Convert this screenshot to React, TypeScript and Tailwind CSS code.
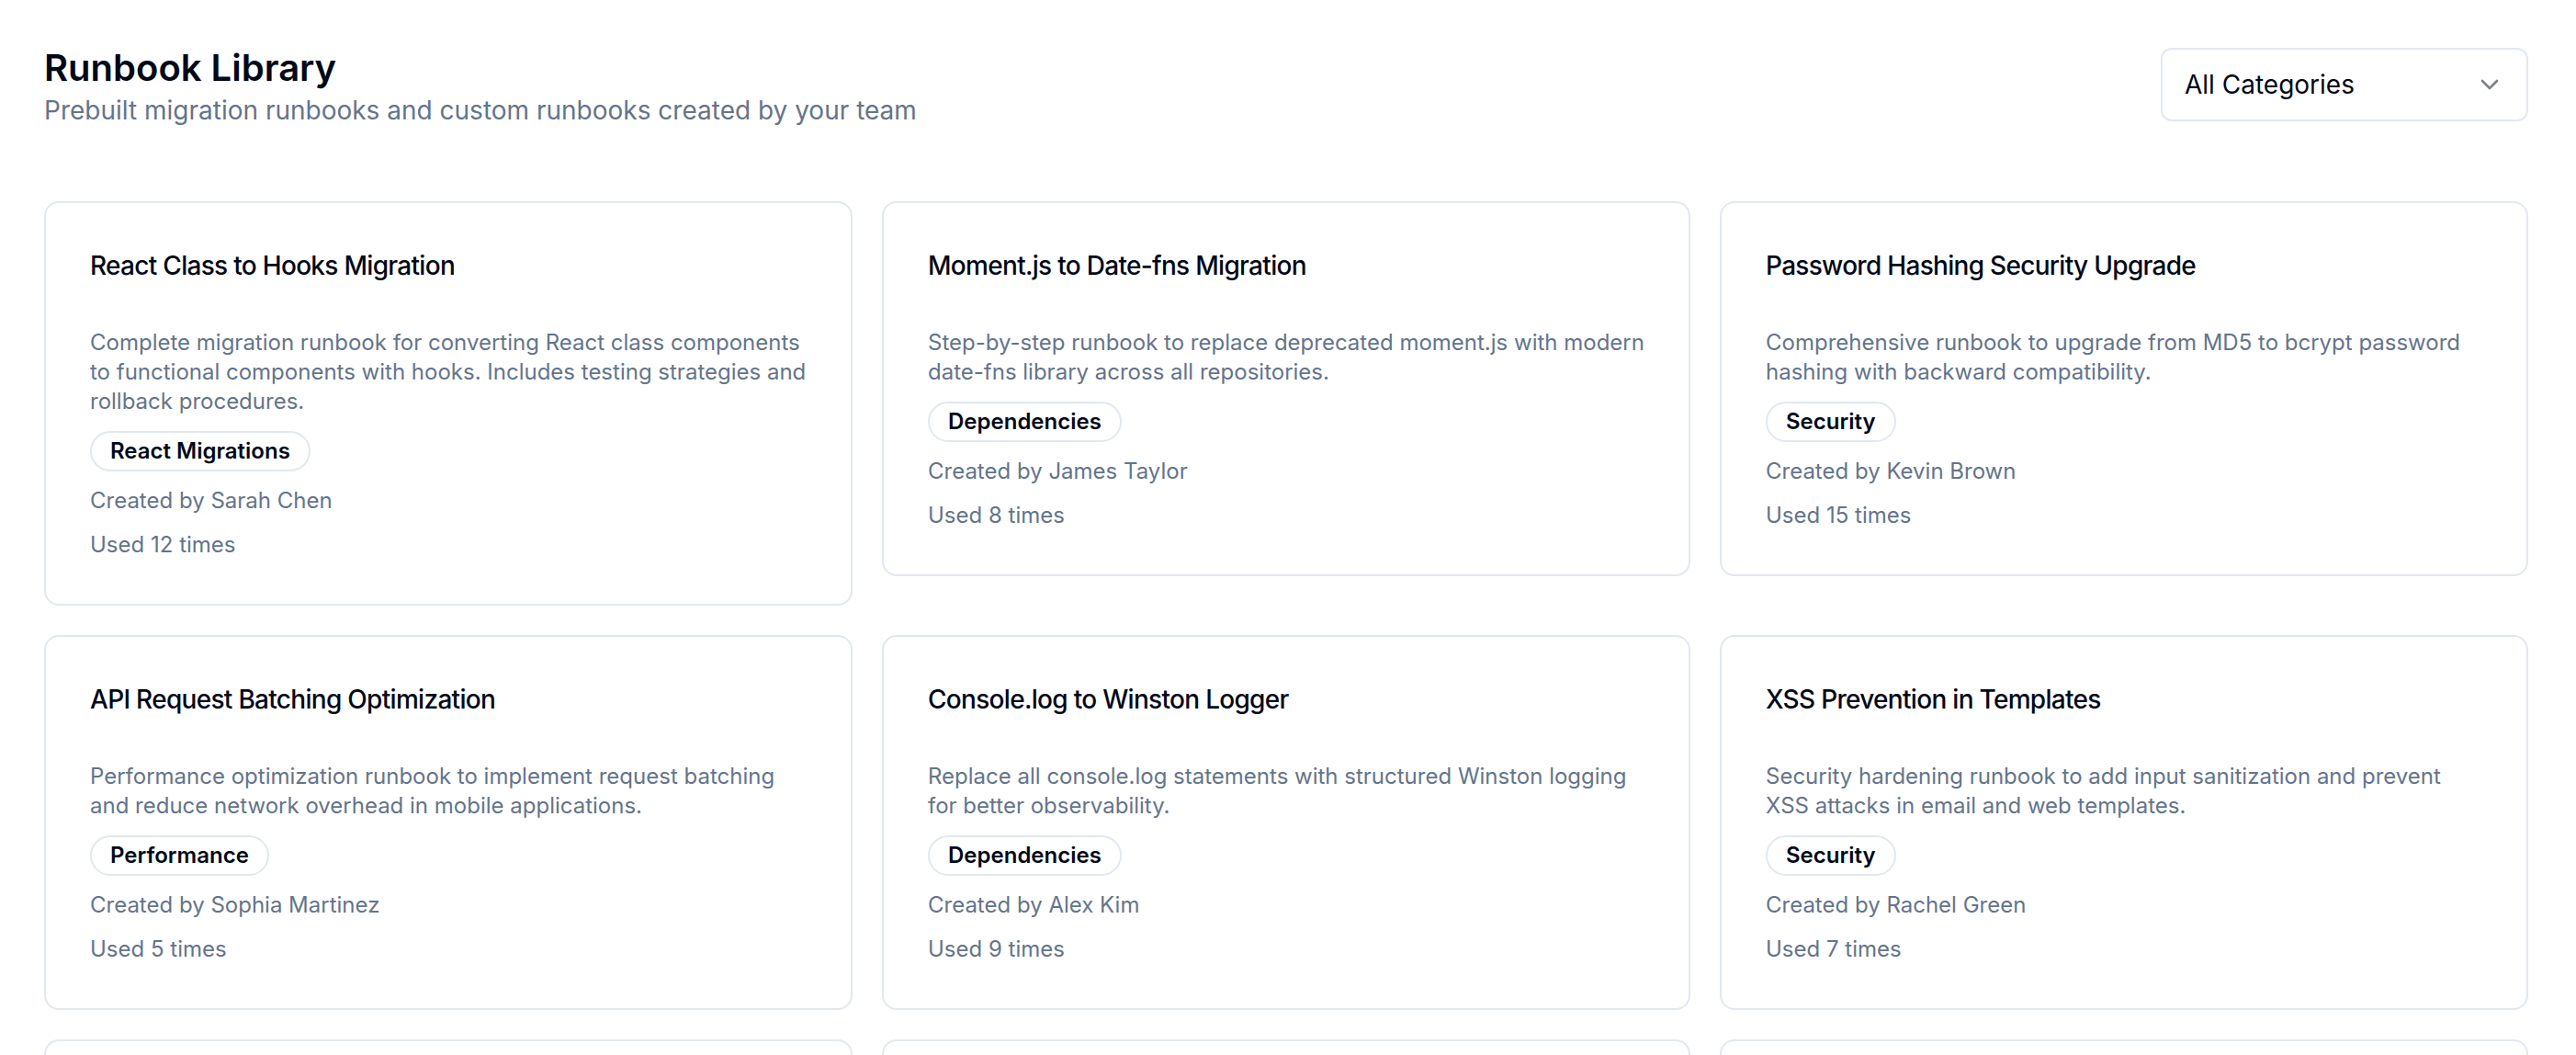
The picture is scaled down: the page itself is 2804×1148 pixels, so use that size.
import { ChevronDown } from 'lucide-react';

interface Runbook {
  id: string;
  title: string;
  description: string;
  category: string;
  author: string;
  uses: number;
}

const runbooks: Runbook[] = [
  {
    id: 'rb-1',
    title: 'React Class to Hooks Migration',
    description:
      'Complete migration runbook for converting React class components to functional components with hooks. Includes testing strategies and rollback procedures.',
    category: 'React Migrations',
    author: 'Sarah Chen',
    uses: 12,
  },
  {
    id: 'rb-2',
    title: 'Moment.js to Date-fns Migration',
    description: 'Step-by-step runbook to replace deprecated moment.js with modern date-fns library across all repositories.',
    category: 'Dependencies',
    author: 'James Taylor',
    uses: 8,
  },
  {
    id: 'rb-3',
    title: 'Password Hashing Security Upgrade',
    description: 'Comprehensive runbook to upgrade from MD5 to bcrypt password hashing with backward compatibility.',
    category: 'Security',
    author: 'Kevin Brown',
    uses: 15,
  },
  {
    id: 'rb-4',
    title: 'API Request Batching Optimization',
    description: 'Performance optimization runbook to implement request batching and reduce network overhead in mobile applications.',
    category: 'Performance',
    author: 'Sophia Martinez',
    uses: 5,
  },
  {
    id: 'rb-5',
    title: 'Console.log to Winston Logger',
    description: 'Replace all console.log statements with structured Winston logging for better observability.',
    category: 'Dependencies',
    author: 'Alex Kim',
    uses: 9,
  },
  {
    id: 'rb-6',
    title: 'XSS Prevention in Templates',
    description: 'Security hardening runbook to add input sanitization and prevent XSS attacks in email and web templates.',
    category: 'Security',
    author: 'Rachel Green',
    uses: 7,
  },
  {
    id: 'rb-7',
    title: 'Webpack to Vite Migration',
    description: 'Migrate build tooling from Webpack to Vite for faster local development and smaller production bundles.',
    category: 'Build Tools',
    author: 'Daniel Park',
    uses: 4,
  },
  {
    id: 'rb-8',
    title: 'Lodash Tree Shaking Cleanup',
    description: 'Replace full lodash imports with per-method imports to reduce bundle size.',
    category: 'Performance',
    author: 'Emily Davis',
    uses: 6,
  },
  {
    id: 'rb-9',
    title: 'SQL Injection Hardening',
    description: 'Convert raw string queries to parameterized statements across all data access layers.',
    category: 'Security',
    author: 'Michael Lee',
    uses: 11,
  },
];

function RunbookCard({ runbook }: { runbook: Runbook }) {
  return (
    <div className="rounded-2xl border-2 border-[#e2e8f0] bg-white text-[#020817]">
      {/* Header */}
      <div className="p-12">
        <h3 className="text-[28px] leading-[40px] font-medium tracking-[-0.7px]">{runbook.title}</h3>
      </div>

      {/* Contenu */}
      <div className="flex flex-col items-start gap-4 px-12 pb-12">
        <p className="text-[24px] leading-[32px] text-[#64748b]">{runbook.description}</p>
        <span className="inline-flex items-center rounded-full border-2 border-[#e2e8f0] px-5 py-1 text-[24px] leading-[32px] font-semibold text-[#020817]">
          {runbook.category}
        </span>
        <p className="text-[24px] leading-[32px] text-[#64748b]">Created by {runbook.author}</p>
        <p className="text-[24px] leading-[32px] text-[#64748b]">Used {runbook.uses} times</p>
      </div>
    </div>
  );
}

export default function App() {
  return (
    <div className="min-h-screen bg-white font-['Inter',sans-serif] pl-12 pr-[52px] py-12">
      <div className="flex items-start justify-between">
        <div>
          <h1 className="text-[40px] leading-[52px] font-semibold text-[#020817]">Runbook Library</h1>
          <p className="text-[28px] leading-[40px] text-[#64748b]">
            Prebuilt migration runbooks and custom runbooks created by your team
          </p>
        </div>
        <button className="mt-[4px] flex h-[80px] w-[400px] items-center justify-between rounded-xl border-2 border-[#e2e8f0] bg-white px-6 text-[28px] text-[#020817]">
          <span>All Categories</span>
          <ChevronDown size={32} strokeWidth={2} className="text-[#020817] opacity-50" />
        </button>
      </div>

      <div className="mt-[79px] grid grid-cols-3 items-start gap-8">
        {runbooks.map((runbook) => (
          <RunbookCard key={runbook.id} runbook={runbook} />
        ))}
      </div>
    </div>
  );
}
